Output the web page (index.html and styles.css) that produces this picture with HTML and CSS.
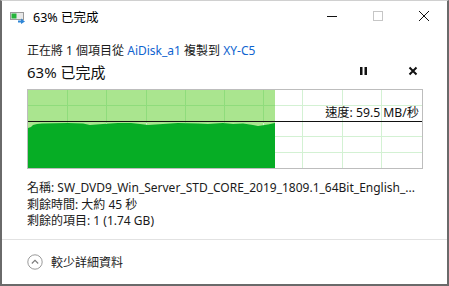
FILE: index.html
```html
<!DOCTYPE html>
<html lang="zh-Hant">
<head>
<meta charset="utf-8">
<link rel="stylesheet" href="styles.css">
</head>
<body>
<div class="window">
  <div class="titlebar">
    <svg class="app-icon" width="16" height="12" viewBox="0 0 16 12">
      <rect x="0.5" y="0.5" width="13" height="7" fill="#e8e8e8" stroke="#9a9a9a"/>
      <rect x="1.5" y="1.5" width="5" height="5" fill="#25b43a"/>
      <path d="M8 8.5 H11 V6.5 L15 9.5 L11 12 V10.5 H8 Z" fill="#2f86d6"/>
    </svg>
    <span class="title">63% 已完成</span>
    <div class="controls">
      <span class="ctl"><svg width="12" height="12" viewBox="0 0 12 12"><path d="M1 6.5 H11" stroke="#111" stroke-width="1"/></svg></span>
      <span class="ctl"><svg width="12" height="12" viewBox="0 0 12 12"><rect x="1.5" y="1.5" width="9" height="9" fill="none" stroke="#c6c6c6"/></svg></span>
      <span class="ctl"><svg width="12" height="12" viewBox="0 0 12 12"><path d="M1 1 L11 11 M11 1 L1 11" stroke="#111" stroke-width="1"/></svg></span>
    </div>
  </div>
  <div class="content">
    <div class="line1">正在將 1 個項目從 <span class="link">AiDisk_a1</span> 複製到 <span class="link">XY-C5</span></div>
    <div class="line2">
      <span class="pct">63% 已完成</span>
      <span class="actions">
        <svg class="pause" width="10" height="10" viewBox="0 0 10 10"><rect x="1" y="1" width="2.5" height="8" fill="#111"/><rect x="5.5" y="1" width="2.5" height="8" fill="#111"/></svg>
        <svg class="stop" width="10" height="10" viewBox="0 0 10 10"><path d="M1.5 1.5 L8.5 8.5 M8.5 1.5 L1.5 8.5" stroke="#111" stroke-width="2"/></svg>
      </span>
    </div>
    <div class="graph">
      <svg width="394" height="78" viewBox="0 0 394 78">
        <rect x="0" y="0" width="247" height="78" fill="#aae58f"/>
        <g stroke="#d3f1d3" stroke-width="1">
          <path d="M0 15.5 H394 M0 31.5 H394 M0 46.5 H394 M0 62.5 H394"/>
          <path d="M39.5 0 V78 M78.5 0 V78 M118.5 0 V78 M157.5 0 V78 M196.5 0 V78 M235.5 0 V78 M274.5 0 V78 M314.5 0 V78 M353.5 0 V78"/>
        </g>
        <g stroke="#8fdc7c" stroke-width="1">
          <path d="M0 15.5 H247"/>
          <path d="M39.5 0 V33 M78.5 0 V33 M118.5 0 V33 M157.5 0 V33 M196.5 0 V33 M235.5 0 V33"/>
        </g>
        <path d="M0 78 V38 L3 37 L5 35 L9 34 L14 33.5 L40 33 L55 33.5 L62 35 L75 34 L90 33 L103 33 L112 34 L120 35 L135 34 L150 33 L170 33.5 L180 34 L195 33 L205 34 L215 33.5 L225 35 L230 36 L240 34.5 L247 33 V78 Z" fill="#06ad25"/>
        <path d="M0 31.5 H394" stroke="#111" stroke-width="1"/>
      </svg>
      <span class="speed">速度: 59.5 MB/秒</span>
    </div>
    <div class="info">
      <div class="row name">名稱: SW_DVD9_Win_Server_STD_CORE_2019_1809.1_64Bit_English_...</div>
      <div class="row">剩餘時間: 大約 45 秒</div>
      <div class="row">剩餘的項目: 1 (1.74 GB)</div>
    </div>
  </div>
  <div class="footer">
    <svg class="chev" width="16" height="16" viewBox="0 0 16 16"><circle cx="8" cy="8" r="7.2" fill="none" stroke="#9a9a9a" stroke-width="1"/><path d="M4.8 9.5 L8 6.3 L11.2 9.5" fill="none" stroke="#7a7a7a" stroke-width="1.1"/></svg>
    <span class="footer-text">較少詳細資料</span>
  </div>
</div>
</body>
</html>
```
FILE: styles.css
```css
html, body {
  margin: 0;
  padding: 0;
  background: #ffffff;
}
body {
  font-family: "Noto Sans", "Noto Sans CJK TC", sans-serif;
  color: #000;
}
.window {
  box-sizing: border-box;
  width: 449px;
  height: 286px;
  border: 1px solid #6a6a6a;
  border-top-color: #d0d0d0;
  border-left-width: 2px;
  border-right-width: 2px;
  border-bottom-width: 2px;
  display: flex;
  flex-direction: column;
  background: #fff;
}
.titlebar {
  height: 30px;
  display: flex;
  align-items: center;
  padding-left: 8px;
}
.app-icon {
  margin-top: 3px;
  margin-right: 7px;
}
.title {
  font-size: 12.5px;
  color: #000;
}
.controls {
  margin-left: auto;
  display: flex;
  height: 30px;
}
.ctl {
  width: 46px;
  display: flex;
  align-items: center;
  justify-content: center;
}
.content {
  padding: 11px 0 0 25px;
  flex: 1;
}
.line1 {
  font-size: 12px;
  height: 18px;
  line-height: 18px;
  color: #1a1a1a;
}
.link {
  color: #0f64cf;
}
.line2 {
  display: flex;
  align-items: center;
  height: 22px;
  width: 396px;
}
.pct {
  font-size: 15px;
  color: #111;
}
.actions {
  margin-left: auto;
  display: flex;
  align-items: center;
  gap: 39px;
  padding-right: 5px;
}
.graph {
  position: relative;
  margin-top: 7px;
  width: 394px;
  height: 78px;
  border: 1px solid #bdbdbd;
}
.graph svg {
  display: block;
}
.speed {
  position: absolute;
  right: 3px;
  top: 15px;
  font-size: 12.2px;
  line-height: 16px;
  color: #111;
}
.info {
  margin-top: 11px;
  font-size: 12px;
  color: #1a1a1a;
}
.row {
  height: 16.5px;
  line-height: 16.5px;
  white-space: nowrap;
}
.footer {
  height: 44px;
  border-top: 1px solid #e2e2e2;
  display: flex;
  align-items: center;
  padding-left: 25px;
}
.chev {
  margin-right: 8px;
}
.footer-text {
  font-size: 12px;
  color: #1a1a1a;
}
```
